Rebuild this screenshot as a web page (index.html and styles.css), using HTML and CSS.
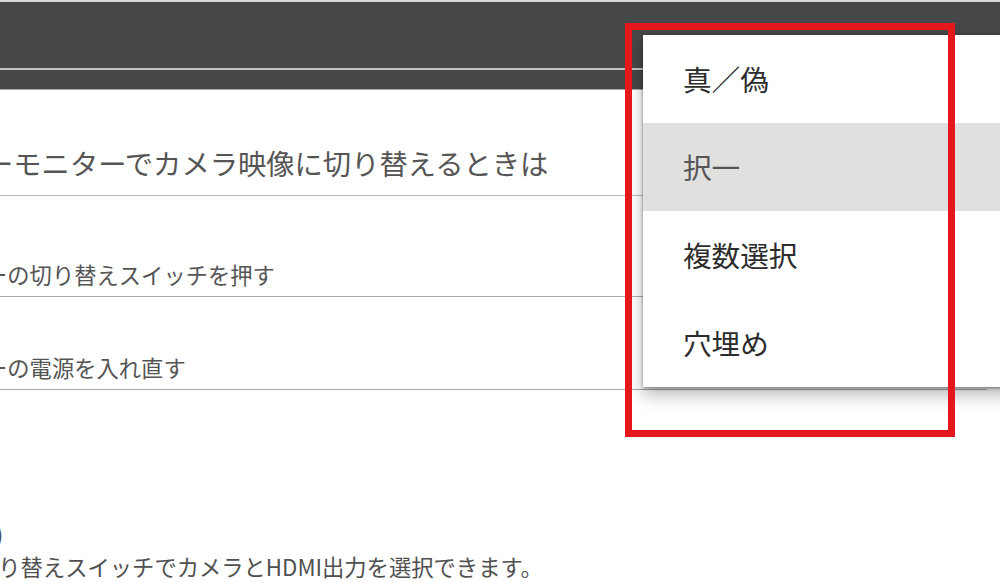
FILE: index.html
```html
<!DOCTYPE html>
<html lang="ja">
<head>
    <meta charset="UTF-8">
    <meta name="viewport" content="width=device-width, initial-scale=1.0">
    <title>問題の編集</title>
    <link rel="stylesheet" href="styles.css">
</head>
<body>
    <div class="topbar"></div>
    <div class="subbar"></div>

    <main class="panel">
        <h2 class="question">ーモニターでカメラ映像に切り替えるときは</h2>

        <ul class="choices">
            <li>ーの切り替えスイッチを押す</li>
            <li>ーの電源を入れ直す</li>
        </ul>

        <div class="note">
            <p class="note-title">(注)</p>
            <p>切り替えスイッチでカメラとHDMI出力を選択できます。</p>
        </div>
    </main>

    <ul class="type-menu">
        <li>真／偽</li>
        <li class="active">択一</li>
        <li>複数選択</li>
        <li>穴埋め</li>
    </ul>

    <div class="highlight"></div>
</body>
</html>
```

FILE: styles.css
```css
* {
    box-sizing: border-box;
    margin: 0;
    padding: 0;
}
body {
    font-family: "Noto Sans CJK JP", "Noto Sans", sans-serif;
    background-color: #ffffff;
    color: #555555;
    overflow: hidden;
    width: 1000px;
    height: 582px;
    position: relative;
}
.topbar {
    height: 70px;
    background-color: #464749;
    border-top: 2px solid #d6d6d4;
    border-bottom: 2px solid #c4c4c4;
}
.subbar {
    height: 20px;
    background-color: #464749;
    border-bottom: 1px solid #a6a6a6;
}
.panel {
    margin-left: -15px;
    width: 1002px;
}
.question {
    margin-top: 53px;
    padding-bottom: 12px;
    font-size: 28.3px;
    font-weight: 400;
    line-height: 40px;
    color: #555555;
    border-bottom: 1px solid #b9b9b9;
    white-space: nowrap;
}
.choices {
    list-style-type: none;
    margin-top: 8px;
}
.choices li {
    padding: 54px 0 6px;
    font-size: 22.3px;
    line-height: 32px;
    color: #555555;
    border-bottom: 1px solid #a9a9a9;
    white-space: nowrap;
}
.note {
    margin-top: 127px;
    margin-left: -9px;
    font-size: 22.3px;
    line-height: 33px;
    color: #505050;
    white-space: nowrap;
}
.note-title {
    margin-left: -10px;
}
.type-menu {
    position: absolute;
    left: 643px;
    top: 35px;
    width: 370px;
    list-style-type: none;
    background-color: #ffffff;
    box-shadow: 0 8px 16px rgba(0, 0, 0, 0.28), 0 1px 3px rgba(0, 0, 0, 0.45);
}
.type-menu li {
    height: 88px;
    padding-left: 40px;
    font-size: 28.6px;
    line-height: 88px;
    color: #2c2c2c;
}
.type-menu li.active {
    background-color: #e0e0df;
    color: #555555;
}
.highlight {
    position: absolute;
    left: 625px;
    top: 23px;
    width: 330px;
    height: 414px;
    border: 7px solid #e4171c;
}
```
